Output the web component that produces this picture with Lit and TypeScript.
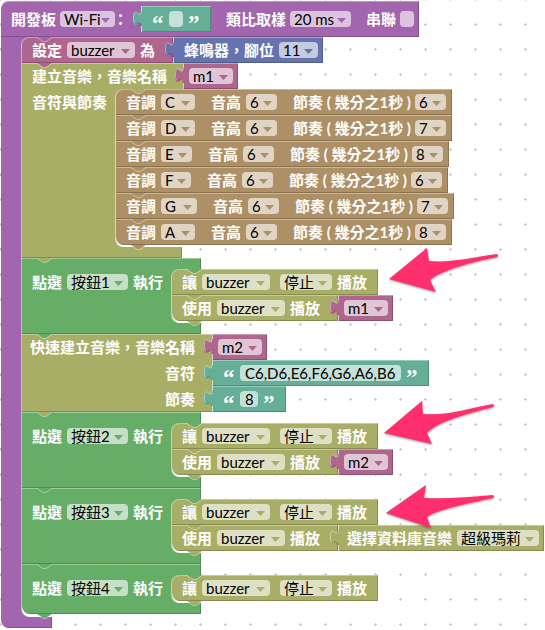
import { LitElement, html, css, svg, nothing } from "lit";
import type { TemplateResult } from "lit";
import { customElement } from "lit/decorators.js";

type Part = TemplateResult | typeof nothing;

/** Outline of the nub under a statement block. */
const nub = () => html`<svg class="nub" viewBox="0 0 15 5" aria-hidden="true">
  <path class="fill" d="M0 0 L6 4 H9 L15 0 Z"></path>
  <path class="lit" d="M0 .5 L6 4.5 H9 L15 .5"></path>
</svg>`;

/** Puzzle tab on the left side of a value block. */
const plug = () => html`<svg class="plug" viewBox="0 0 9 16" aria-hidden="true">
  <path class="fill" d="M9 0 H8 C8 10 0 -8 0 7.5 S8 5 8 15 H9 Z"></path>
  <path class="lit" d="M8 0 C8 10 .5 -8 .5 7.5 C.5 10 1 12 2 12"></path>
  <path class="dim" d="M2.5 12.2 C4 12.5 6 10 8 15"></path>
</svg>`;

const word = (text: string, kind = "") => html`<span class="word ${kind}">${text}</span>`;

const pick = (name: string, value: string, size: string) => html`<span class="pick ${size}">
  <select aria-label=${name}><option>${value}</option></select>
</span>`;

const field = (name: string, value: string, size: string) =>
  html`<input class="field ${size}" type="text" aria-label=${name} .value=${value} />`;

const value = (colour: string, ...parts: Part[]) =>
  html`<div class="value ${colour}">${plug()}${parts}</div>`;

const quoted = (name: string, text: string, size: string) =>
  value("teal quoted", html`<span class="quote">“</span>`, field(name, text, size), html`<span class="quote">”</span>`);

const row = (colour: string, parts: Part[], tail: Part = nothing) => html`<div class="block row ${colour}">
  <div class="face">${parts}</div>${tail}${nub()}
</div>`;

const stack = (...blocks: Part[]) => html`<div class="stack">${nub()}${blocks}</div>`;

const arrows = [
  "M7 34 L45 3 L47 16 C70 18 92 12 115 9 Q117 11 115 12 C90 17 60 25 48 35 L54 47 Z",
  "M2 34 L40 2 L41 15 C66 17 88 9 111 5 Q113 7 111 8 C88 14 56 22 45 34 L50 45 Z",
  "M4 38 L44 10 L42 23 C66 24 88 22 111 20 Q113 22 111 23 C88 28 56 34 45 42 L49 53 Z",
];

const arrow = (index: number): Part =>
  index < arrows.length
    ? html`<svg class="arrow" viewBox="0 0 118 56" aria-hidden="true">${svg`<path d=${arrows[index]}></path>`}</svg>`
    : nothing;

const notes: [string, string, string][] = [
  ["C", "w34", "6"],
  ["D", "w34", "7"],
  ["E", "w31", "8"],
  ["F", "w30", "6"],
  ["G", "w36", "7"],
  ["A", "w34", "8"],
];

const noteRow = ([pitch, size, beat]: [string, string, string]) =>
  row("tan", [
    word("音調"), pick("音調", pitch, size),
    word("音高", "apart"), pick("音高", "6", "w31"),
    word("節奏 ( 幾分之1秒 )", "apart beat"), pick("節奏", beat, "w31"),
  ]);

const stopRow = (index: number) =>
  row("olive stop", [word("讓"), pick("裝置", "buzzer", "w68"), pick("動作", "停止", "w52 after"), word("播放")], arrow(index));

const playRow = (tune: TemplateResult) =>
  row("olive socket", [word("使用"), pick("裝置", "buzzer", "w68"), word("播放")], tune);

const tune = (name: string) => value("pink", pick("音樂", name, "w44"));

const clickBlock = (index: number, play: Part) => html`<div class="block green click">
  <div class="lid"></div>
  <div class="body">
    <div class="side">${word("點選")}${pick("按鈕", `按鈕${index + 1}`, "w61")}${word("執行")}</div>
    ${stack(stopRow(index), play)}
  </div>
  <div class="foot"></div>
  ${nub()}
</div>`;

@customElement("app-root")
export class AppRoot extends LitElement {
  static styles = css`
    :host {
      display: block;
      position: relative;
      box-sizing: border-box;
      min-height: 100vh;
      padding: 1px;
      overflow: hidden;
      background: #fff;
      color: #fff;
      font: 700 15px/16px Lato, "Noto Sans CJK TC", sans-serif;
    }
    * { box-sizing: border-box; }
    .grid { position: absolute; inset: 0; width: 100%; height: 100%; }
    .grid path { stroke: #c8c8cc; fill: none; }

    .purple { --c: #a365ad; }
    .pink { --c: #af668e; }
    .olive { --c: #a9ae66; }
    .green { --c: #66ae67; }
    .tan { --c: #ae9067; }
    .blue { --c: #6573ae; }
    .teal { --c: #65ae98; }

    .block { position: relative; width: max-content; }
    .row, .body, .line { display: flex; }
    .face, .side, .value {
      display: flex;
      align-items: flex-start;
      gap: 5px;
      height: 26px;
      padding: 5px 5px 0 10px;
      background: var(--c);
      white-space: nowrap;
    }
    .face, .value {
      box-shadow: inset 0 1px rgba(255, 255, 255, 0.35), inset -1px -1px rgba(0, 0, 0, 0.2);
    }
    .value { position: relative; flex: none; border-left: 1px solid rgba(255, 255, 255, 0.6); }
    .value.pink { padding-left: 5px; }
    .value.olive { padding-left: 8px; }
    .stop > .face { padding-right: 11px; }
    .socket > .face { width: 166px; }
    .tan > .face { padding-right: 6px; }
    .setter > .face { width: 151px; }

    .side { position: relative; height: auto; }
    .side::after {
      content: "";
      position: absolute;
      left: 100%;
      top: 0;
      width: 9px;
      height: 100%;
      background: var(--c);
    }
    .stack {
      position: relative;
      padding-bottom: 2px;
      border-radius: 8px 0 0 8px;
      background: linear-gradient(#fff, #fff) 0 100% / 30px 10px no-repeat;
      box-shadow: -1px 0 rgba(255, 255, 255, 0.5);
    }
    .lid, .foot { height: 11px; background: var(--c); }
    .lid { box-shadow: inset 0 1px rgba(255, 255, 255, 0.35), inset -1px 0 rgba(0, 0, 0, 0.2); }
    .foot { box-shadow: inset -1px -1px rgba(0, 0, 0, 0.2); }
    .click .lid, .click .foot { width: 179px; }
    .click .side { width: 150px; }

    .stack > .nub + .row > .face, .stack > .nub + .click > .lid { border-top-left-radius: 8px; }
    .stack > .row:last-child > .face, .stack > .click:last-child > .foot { border-bottom-left-radius: 8px; }

    .song .side { width: 94px; }
    .song .foot { width: 160px; }
    .song > .line > .face { width: 161px; box-shadow: inset 0 1px rgba(255, 255, 255, 0.35); }
    .quick .face {
      width: 190px;
      padding-right: 17px;
      justify-content: flex-end;
      box-shadow: none;
    }
    .quick .line:nth-child(3) > .face { box-shadow: inset 0 -1px rgba(0, 0, 0, 0.2); }
    .quick .line:first-child > .face { box-shadow: inset 0 1px rgba(255, 255, 255, 0.35); }

    .head {
      display: flex;
      align-items: center;
      width: 418px;
      height: 36px;
      padding: 0 5px 0 10px;
      gap: 4px;
      border-top-left-radius: 8px;
      background: var(--c);
      box-shadow: inset 0 1px rgba(255, 255, 255, 0.3), inset -1px -1px rgba(0, 0, 0, 0.2);
      white-space: nowrap;
    }
    .head .word.colon { width: 16px; margin: 0 8px 0 -6px; }
    .head .word.after { margin-left: 11px; }
    .root > .body > .side { width: 21px; padding: 0; }
    .root > .body > .stack { padding-bottom: 3px; }
    .root > .foot { width: 51px; border-bottom-left-radius: 8px; }

    .word { flex: none; height: 16px; }
    .word.apart { margin-left: 11px; }
    .word.beat { width: 117px; }
    .pick { position: relative; flex: none; height: 16px; }
    .pick.after { margin-left: 5px; }
    .pick::after {
      content: "";
      position: absolute;
      right: 5px;
      top: 7px;
      width: 9px;
      height: 5px;
      background: var(--c);
      clip-path: polygon(0 0, 100% 0, 50% 100%);
      pointer-events: none;
    }
    select, .field {
      display: block;
      flex: none;
      height: 16px;
      margin: 0;
      padding: 0 0 0 4px;
      border: 0;
      border-radius: 4px;
      outline-offset: 1px;
      appearance: none;
      background: rgba(255, 255, 255, 0.62);
      color: #000;
      font: 400 15px/16px Lato, "Noto Sans CJK TC", sans-serif;
    }
    select { width: 100%; }
    .field { padding: 0 5px; }
    .quote { flex: none; width: 12px; height: 16px; font: 700 23px/26px "Liberation Serif", serif; }
    .quoted { padding-right: 11px; }
    .w14 { width: 14px; }
    .w18 { width: 18px; }
    .w30 { width: 30px; }
    .w31 { width: 31px; }
    .w34 { width: 34px; }
    .w36 { width: 36px; }
    .w39 { width: 39px; }
    .w44 { width: 44px; }
    .w52 { width: 52px; }
    .w55 { width: 55px; }
    .w61 { width: 61px; }
    .w68 { width: 68px; }
    .w82 { width: 82px; }
    .w161 { width: 161px; }

    .nub { position: absolute; z-index: 2; left: 15px; top: 100%; width: 15px; height: 5px; }
    .stack > .nub { top: 0; }
    .plug { position: absolute; left: -9px; top: 5px; width: 9px; height: 16px; }
    .fill { fill: var(--c); }
    .lit { fill: none; stroke: rgba(255, 255, 255, 0.4); }
    .dim { fill: none; stroke: rgba(0, 0, 0, 0.2); }
    .arrow {
      position: absolute;
      z-index: 5;
      left: calc(100% + 4px);
      top: -24px;
      width: 118px;
      height: 56px;
      overflow: visible;
      fill: #ff2f6d;
      filter: drop-shadow(0 1px 1px rgba(0, 0, 0, 0.4));
      pointer-events: none;
    }
  `;

  render() {
    return html`
      <svg class="grid" aria-hidden="true">
        <defs>
          <pattern id="dots" width="25" height="25" x="-12" y="12" patternUnits="userSpaceOnUse">
            <path d="M11 12.5 h3 M12.5 11 v3"></path>
          </pattern>
        </defs>
        <rect width="100%" height="100%" fill="url(#dots)"></rect>
      </svg>
      <main class="block root purple">
        <div class="head">
          ${word("開發板")}${pick("開發板", "Wi-Fi", "w55")}${word("：", "colon")}
          ${quoted("裝置", "", "w14")}
          ${word("類比取樣", "after")}${pick("類比取樣", "20 ms", "w61")}
          ${word("串聯", "after")}${field("串聯", "", "w14")}
        </div>
        <div class="body">
          <div class="side"></div>
          ${stack(
            row(
              "pink setter",
              [word("設定"), pick("變數", "buzzer", "w68"), word("為")],
              value("blue", word("蜂鳴器，腳位"), pick("腳位", "11", "w39")),
            ),
            html`<div class="block olive song">
              <div class="line"><div class="face">${word("建立音樂，音樂名稱")}</div>${tune("m1")}</div>
              <div class="body">
                <div class="side">${word("音符與節奏")}</div>
                ${stack(...notes.map(noteRow))}
              </div>
              <div class="foot"></div>
              ${nub()}
            </div>`,
            clickBlock(0, playRow(tune("m1"))),
            html`<div class="block olive quick">
              <div class="line"><div class="face">${word("快速建立音樂，音樂名稱")}</div>${tune("m2")}</div>
              <div class="line"><div class="face">${word("音符")}</div>${quoted("音符", "C6,D6,E6,F6,G6,A6,B6", "w161")}</div>
              <div class="line"><div class="face">${word("節奏")}</div>${quoted("節奏", "8", "w18")}</div>
              ${nub()}
            </div>`,
            clickBlock(1, playRow(tune("m2"))),
            clickBlock(2, playRow(value("olive", word("選擇資料庫音樂"), pick("音樂", "超級瑪莉", "w82")))),
            clickBlock(3, nothing),
          )}
        </div>
        <div class="foot"></div>
      </main>
    `;
  }
}
